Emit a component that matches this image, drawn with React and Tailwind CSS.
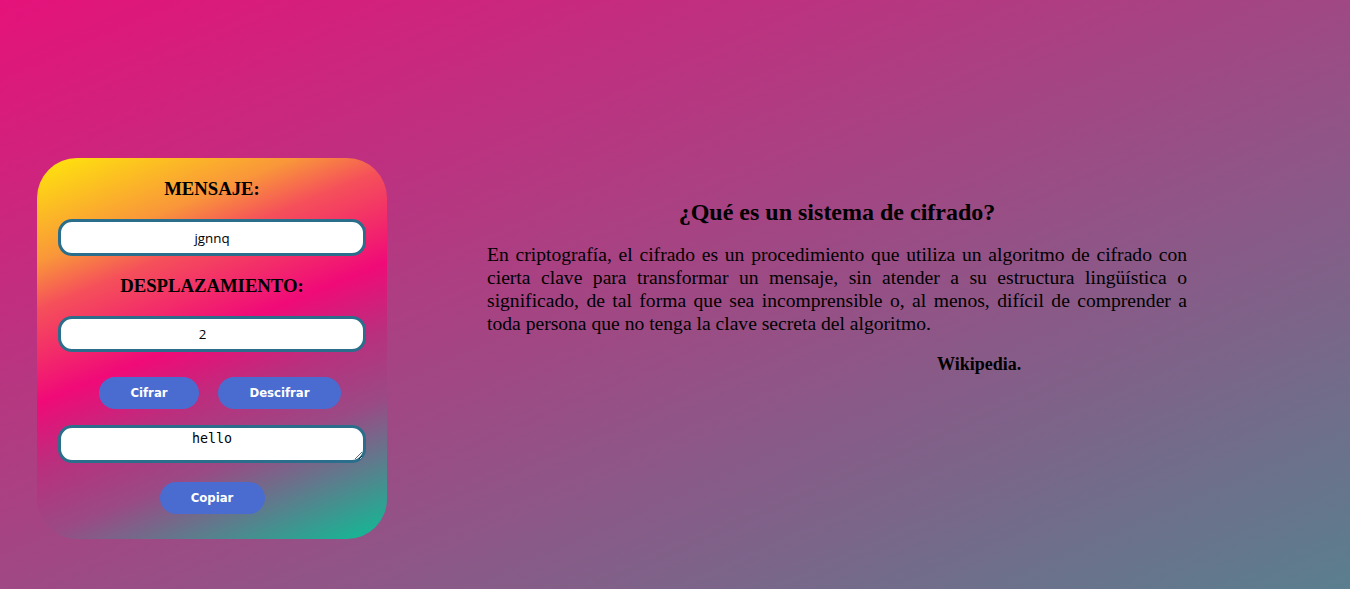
import React from "react";

export default function App() {
  return (
    <div className="w-[1350px] h-[589px] overflow-hidden bg-[linear-gradient(to_bottom_right,#e5127a,#5a7f8e)] font-['Liberation_Serif',serif] text-black">
      <div className="flex items-start pl-[37px] pt-[158px] gap-[100px]">
        <div className="w-[350px] h-[381px] shrink-0 rounded-[40px] bg-[linear-gradient(158deg,#ffe80a_0%,#f9963a_20%,#f5505a_29%,#f00a78_47%,#b8307e_60%,#9a4a85_73%,#0cbe96_100%)] pt-[20px] flex flex-col items-center">
          <h3 className="text-[18.72px] leading-[22px] font-bold">MENSAJE:</h3>
          <input
            type="text"
            defaultValue="jgnnq"
            className="mt-[19px] w-[308px] h-[37px] bg-white border-[3px] border-[#2b6e8b] rounded-[14px] text-center text-[13.33px] font-['Open_Sans','Liberation_Sans',sans-serif] outline-none"
          />
          <h3 className="mt-[19px] text-[18.72px] leading-[22px] font-bold">DESPLAZAMIENTO:</h3>
          <input
            type="number"
            defaultValue="2"
            className="mt-[19px] w-[308px] h-[36px] bg-white border-[3px] border-[#2b6e8b] rounded-[14px] text-center text-[13.33px] font-['Open_Sans','Liberation_Sans',sans-serif] outline-none pr-[4px]"
          />
          <div className="mt-[25px] w-full flex pl-[62px] gap-[19px]">
            <button className="w-[100px] h-[32px] rounded-full bg-[#4a6cd0] text-white text-[13px] font-bold font-['DejaVu_Sans_Condensed','DejaVu_Sans',sans-serif]">
              Cifrar
            </button>
            <button className="w-[123px] h-[32px] rounded-full bg-[#4a6cd0] text-white text-[13px] font-bold font-['DejaVu_Sans_Condensed','DejaVu_Sans',sans-serif]">
              Descifrar
            </button>
          </div>
          <textarea
            defaultValue="hello"
            className="mt-[16px] w-[308px] h-[38px] bg-white border-[3px] border-[#2b6e8b] rounded-[14px] text-center text-[13.33px] leading-[16px] pt-[3px] font-['DejaVu_Sans_Mono','Liberation_Mono',monospace] outline-none"
          />
          <button className="mt-[19px] w-[105px] h-[32px] rounded-full bg-[#4a6cd0] text-white text-[13px] font-bold font-['DejaVu_Sans_Condensed','DejaVu_Sans',sans-serif]">
            Copiar
          </button>
        </div>
        <div className="w-[700px] mt-[40px]">
          <h2 className="text-center text-[24px] leading-[28px] font-bold">¿Qué es un sistema de cifrado?</h2>
          <p className="mt-[17px] text-[19.6px] leading-[23px] text-justify">
            En criptografía, el cifrado es un procedimiento que utiliza un algoritmo de cifrado con cierta clave para transformar un mensaje, sin atender a su estructura lingüística o significado, de tal forma que sea incomprensible o, al menos, difícil de comprender a toda persona que no tenga la clave secreta del algoritmo.
          </p>
          <p className="mt-[18px] pl-[450px] text-[18px] leading-[22px] font-bold">Wikipedia.</p>
        </div>
      </div>
    </div>
  );
}
